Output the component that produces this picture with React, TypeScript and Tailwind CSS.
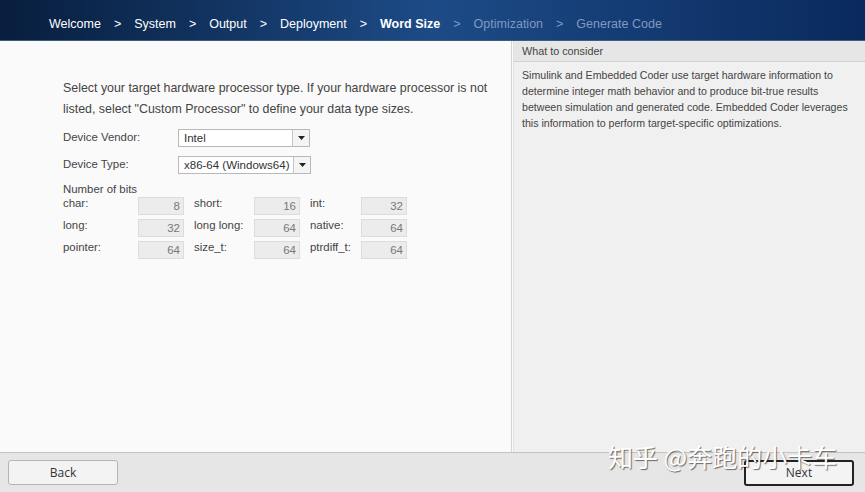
import React from "react";

const steps = [
  { label: "Welcome", state: "done" },
  { label: "System", state: "done" },
  { label: "Output", state: "done" },
  { label: "Deployment", state: "done" },
  { label: "Word Size", state: "current" },
  { label: "Optimization", state: "todo" },
  { label: "Generate Code", state: "todo" },
];

const bits = [
  [["char:", "8"], ["short:", "16"], ["int:", "32"]],
  [["long:", "32"], ["long long:", "64"], ["native:", "64"]],
  [["pointer:", "64"], ["size_t:", "64"], ["ptrdiff_t:", "64"]],
];

function Select({ value, width }: { value: string; width: string }) {
  return (
    <div className={`flex h-[18px] ${width} border border-[#b9b9b9] bg-white`}>
      <div className="flex-1 overflow-hidden whitespace-nowrap pl-[5px] text-[11.5px] leading-[16px] text-[#333]">{value}</div>
      <div className="flex w-[17px] items-center justify-center border-l border-[#c6c6c6] bg-[#f4f4f4]">
        <svg width="7" height="4" viewBox="0 0 7 4">
          <path d="M0 0h7L3.5 4z" fill="#222" />
        </svg>
      </div>
    </div>
  );
}

export default function App() {
  return (
    <div className="relative flex h-[492px] w-[865px] flex-col overflow-hidden bg-[#fafafa] font-['Liberation_Sans',Arial,sans-serif]">
      {/* breadcrumb */}
      <div className="flex h-[41px] items-center border-b border-[#3d5c80] bg-gradient-to-r from-[#081e3e] via-[#1d4b87] to-[#0a2a5d] pl-[49px] pt-[9px] text-[12.5px] text-white">
        {steps.map((s, i) => (
          <React.Fragment key={s.label}>
            {i > 0 && (
              <span className={`mx-[13px] ${s.state === "todo" ? "text-[#7f9ac0]" : "text-white"}`}>&gt;</span>
            )}
            <span
              className={
                s.state === "current"
                  ? "font-bold text-white"
                  : s.state === "todo"
                  ? "text-[#7f9ac0]"
                  : "text-white"
              }
            >
              {s.label}
            </span>
          </React.Fragment>
        ))}
      </div>

      <div className="flex flex-1">
        {/* left */}
        <div className="w-[512px] border-r border-[#d4d4d4] bg-[#fafafa] pl-[63px] pt-[37px] text-[#444]">
          <p className="whitespace-nowrap text-[12.4px] leading-[21px]">
            Select your target hardware processor type. If your hardware processor is not
            <br />
            listed, select "Custom Processor" to define your data type sizes.
          </p>
          <div className="mt-[9px] flex items-center text-[11.4px]">
            <span className="w-[115px]">Device Vendor:</span>
            <Select value="Intel" width="w-[132px]" />
          </div>
          <div className="mt-[9px] flex items-center text-[11.4px]">
            <span className="w-[115px]">Device Type:</span>
            <Select value="x86-64 (Windows64)" width="w-[133px]" />
          </div>
          <div className="mt-[8px] text-[11.4px] leading-[14px]">Number of bits</div>
          <div className="mt-[1px] flex flex-col gap-[4px] text-[11.4px]">
            {bits.map((row, r) => (
              <div key={r} className="flex items-start">
                {row.map(([label, v], c) => (
                  <div key={c} className={`flex items-start ${c === 2 ? "" : "mr-[10px]"}`}>
                    <span className={`${c === 0 ? "w-[75px]" : c === 1 ? "w-[60px]" : "w-[51px]"} -mt-[1px] leading-[14px]`}>{label}</span>
                    <div className="h-[18px] w-[46px] border border-[#dcdcdc] bg-[#ececec] pr-[3px] text-right text-[11.5px] leading-[17px] text-[#777]">
                      {v}
                    </div>
                  </div>
                ))}
              </div>
            ))}
          </div>
        </div>

        {/* right */}
        <div className="ml-[1px] flex-1 border-l border-[#e2e2e2] bg-[#f0f0f0]">
          <div className="h-[21px] border-b border-[#d2d2d2] bg-[#e6e6e6] pl-[8px] text-[10.8px] leading-[21px] text-[#444]">
            What to consider
          </div>
          <p className="whitespace-nowrap px-[8px] pt-[5px] text-[10.6px] leading-[16px] text-[#444]">
            Simulink and Embedded Coder use target hardware information to
            <br />
            determine integer math behavior and to produce bit-true results
            <br />
            between simulation and generated code. Embedded Coder leverages
            <br />
            this information to perform target-specific optimizations.
          </p>
        </div>
      </div>

      {/* footer */}
      <div className="flex h-[40px] items-start justify-between border-t border-[#c4c4c4] bg-[#e6e6e6] px-[8px] pt-[7px] font-['Open_Sans',sans-serif] text-[12px] text-[#333]">
        <button className="h-[25px] w-[110px] rounded-[3px] border border-[#b4b4b4] bg-[#f3f3f3]">Back</button>
        <button className="mr-[3px] h-[26px] w-[110px] rounded-[3px] border-2 border-[#222] bg-[#f3f3f3]">Next</button>
      </div>

      {/* watermark */}
      <div className="pointer-events-none absolute left-[608px] top-[444px] font-['Noto_Sans_CJK_SC',sans-serif] text-[25px] leading-none text-white [text-shadow:1px_1px_1px_rgba(0,0,0,0.55)]">
        知乎 @奔跑的小卡车
      </div>
    </div>
  );
}
